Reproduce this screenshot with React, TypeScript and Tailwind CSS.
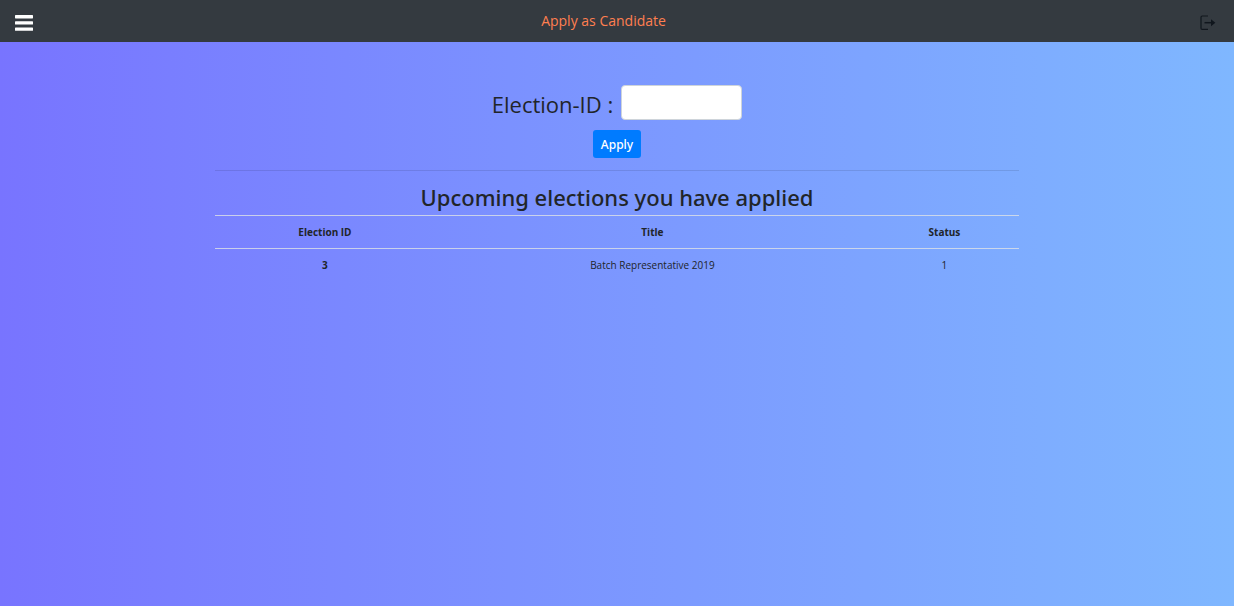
import React from "react";

const applications = [
  { id: 3, title: "Batch Representative 2019", status: 1 },
];

function MenuIcon() {
  return (
    <svg viewBox="0 0 18 16" className="h-4 w-[18px] fill-white" aria-hidden="true">
      <rect x="0" y="0" width="18" height="3.4" rx="0.6" />
      <rect x="0" y="6.2" width="18" height="3.4" rx="0.6" />
      <rect x="0" y="12.4" width="18" height="3.4" rx="0.6" />
    </svg>
  );
}

function LogoutIcon() {
  return (
    <svg viewBox="0 0 16 16" className="size-4" fill="none" aria-hidden="true">
      <path d="M8 1H2.2Q1 1 1 2.2V13.2Q1 14.4 2.2 14.4H8" stroke="#10161d" strokeWidth="1.2" />
      <path d="M4.5 7.7H13" stroke="#10161d" strokeWidth="1.5" />
      <path d="M11 4.2L15.4 7.7L11 11.2Z" fill="#10161d" />
    </svg>
  );
}

export default function App() {
  return (
    <div className="min-h-screen bg-linear-to-r from-[#7874ff] to-[#7fb7ff] font-['Open_Sans','Noto_Sans',sans-serif] text-[#212529]">
      <header className="grid h-[42px] grid-cols-[1fr_auto_1fr] items-center bg-[#343a40] pr-[18px] pl-[15px]">
        <button type="button" aria-label="Open menu" className="mt-1 justify-self-start">
          <MenuIcon />
        </button>
        <h1 className="pr-6 text-sm text-[#ff7f50]">Apply as Candidate</h1>
        <a href="#logout" aria-label="Log out" className="mt-1 justify-self-end">
          <LogoutIcon />
        </a>
      </header>

      <main className="mx-auto w-[65.2%] pt-[43px] text-center">
        <form onSubmit={(event) => event.preventDefault()}>
          <div className="flex items-center justify-center gap-2">
            <label htmlFor="election-id" className="pt-[3px] text-[22px] leading-8">
              Election-ID :
            </label>
            <input
              id="election-id"
              type="text"
              className="h-[35px] w-[121px] rounded-[4px] border border-[#ced4da] bg-white px-2 text-sm"
            />
          </div>
          <button
            type="submit"
            className="mt-[10px] h-7 rounded-[3px] bg-[#007bff] px-2 pt-px font-['Noto_Sans',sans-serif] text-xs font-medium text-white"
          >
            Apply
          </button>
        </form>

        <hr className="mt-3 border-t border-black/10" />

        <h2 className="mt-[10px] mb-[2px] font-['Noto_Sans',sans-serif] text-[22px] leading-8 font-medium">
          Upcoming elections you have applied
        </h2>

        <table className="w-full table-fixed border-collapse text-[10px] leading-4">
          <colgroup>
            <col className="w-[27.4%]" />
            <col className="w-[54%]" />
            <col className="w-[18.6%]" />
          </colgroup>
          <thead>
            <tr className="border-y border-[#dee2e6]/80">
              <th scope="col" className="py-2 font-bold">Election ID</th>
              <th scope="col" className="py-2 font-bold">Title</th>
              <th scope="col" className="py-2 font-bold">Status</th>
            </tr>
          </thead>
          <tbody>
            {applications.map((item) => (
              <tr key={item.id}>
                <th scope="row" className="py-2 font-bold">{item.id}</th>
                <td className="py-2">{item.title}</td>
                <td className="py-2">{item.status}</td>
              </tr>
            ))}
          </tbody>
        </table>
      </main>
    </div>
  );
}
